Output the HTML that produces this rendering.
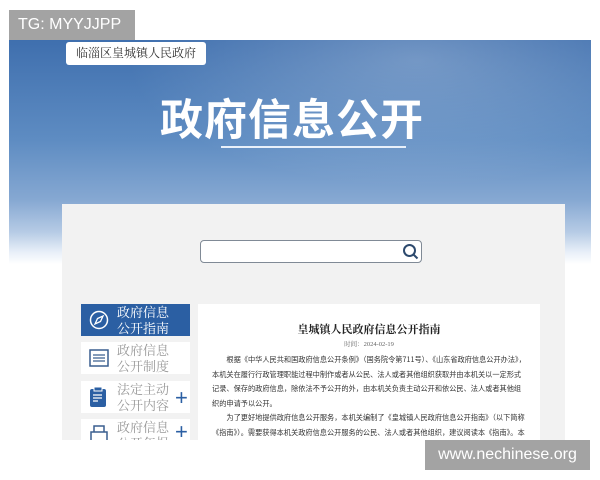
<!DOCTYPE html>
<html><head><meta charset="utf-8"><style>
body{margin:0;width:600px;height:480px;background:#fff;position:relative;overflow:hidden;font-family:"Liberation Serif","Noto Serif CJK SC",serif}
.abs{position:absolute}
.banner{left:9px;top:40px;width:582px;height:400px;background:linear-gradient(180deg,#3f6fae 0%,#5e8cc2 25%,#86a8d2 40%,#b6cbe5 48%,#e8eff8 53%,#fff 56%,#fff 100%)}
.glow{left:9px;top:40px;width:582px;height:200px;background:radial-gradient(ellipse at 70% 10%,rgba(255,255,255,.25),rgba(255,255,255,0) 50%)}
.panel{left:62px;top:204px;width:503px;height:236px;background:#f2f2f2}
.title{left:160px;width:300px;top:92px;font:bold 43px "Noto Sans CJK SC",sans-serif;color:#fff;letter-spacing:1px;line-height:50px}
.side{left:81px;width:109px;background:#fff;font-size:13px;color:#999;line-height:16px}
.side .t{position:absolute;left:36px;top:1px}
</style></head><body>
<div class="abs banner"></div><div class="abs glow"></div>
<div class="abs" style="left:9px;top:10px;width:126px;height:30px;background:#a3a3a3;color:#fff;font:16px 'Liberation Sans',sans-serif;line-height:30px;padding-left:9px;box-sizing:border-box">TG: MYYJJPP</div>
<div class="abs" style="left:66px;top:42px;width:140px;height:23px;background:#fff;border-radius:3px;font-size:12px;line-height:23px;text-align:center;color:#333">临淄区皇城镇人民政府</div>
<div class="abs title">政府信息公开</div>
<div class="abs" style="left:221px;top:146px;width:185px;height:2px;background:#e8f0fa"></div>
<div class="abs panel"></div>
<div class="abs" style="left:200px;top:240px;width:222px;height:23px;border:1px solid #808a96;border-radius:4px;background:#fff;box-sizing:border-box"></div>
<svg class="abs" style="left:402px;top:243px" width="18" height="18"><circle cx="7.5" cy="7.5" r="5.5" stroke="#2d4a6e" stroke-width="2" fill="none"/><line x1="11.5" y1="11.5" x2="15.5" y2="15.5" stroke="#2d4a6e" stroke-width="2"/></svg>
<div class="abs side" style="top:304px;height:32px;background:#2b5fa3;color:#fff"><svg class="abs" style="left:8px;top:6px" width="20" height="20"><circle cx="10" cy="10" r="8.5" stroke="#fff" stroke-width="1.5" fill="none"/><path d="M6 14 L8.5 8.5 L14 6 L11.5 11.5Z" stroke="#fff" stroke-width="1.3" fill="none"/></svg><div class="t">政府信息<br>公开指南</div></div>
<div class="abs side" style="top:342px;height:32px"><svg class="abs" style="left:8px;top:7px" width="20" height="18"><rect x="1" y="1" width="18" height="16" stroke="#3a5f8f" stroke-width="1.5" fill="none"/><path d="M4 6h12M4 9h12M4 12h12" stroke="#3a5f8f" stroke-width="1.2"/></svg><div class="t">政府信息<br>公开制度</div></div>
<div class="abs side" style="top:381px;height:32px"><svg class="abs" style="left:8px;top:5px" width="18" height="22"><rect x="1" y="3" width="16" height="18" rx="2" fill="#2b5fa3"/><rect x="5" y="1" width="8" height="4" fill="#2b5fa3" stroke="#fff"/><path d="M4 9h9M4 12h9M4 15h5" stroke="#fff" stroke-width="1.2"/></svg><div class="t">法定主动<br>公开内容</div><div class="abs" style="left:94px;top:4px;font:22px 'Liberation Sans';color:#2b5fa3">+</div></div>
<div class="abs side" style="top:419px;height:21px;overflow:hidden"><svg class="abs" style="left:8px;top:5px" width="20" height="20"><path d="M2 8h16v12H2z M5 8V2h10v6" stroke="#3a5f8f" stroke-width="1.5" fill="none"/></svg><div class="t">政府信息<br>公开年报</div><div class="abs" style="left:94px;top:0px;font:22px 'Liberation Sans';color:#2b5fa3">+</div></div>
<div class="abs" style="left:198px;top:304px;width:342px;height:136px;background:#fff;overflow:hidden;font-size:7.2px;color:#333;line-height:14.5px">
<div style="text-align:center;font:bold 11px 'Noto Serif CJK SC',serif;margin-top:18px;color:#222;line-height:14px">皇城镇人民政府信息公开指南</div>
<div style="text-align:center;font-size:6.5px;color:#666;margin-top:4px;line-height:10px">时间：2024-02-19</div>
<div style="padding:3px 14px 0 14px;font-family:'Noto Sans CJK SC',sans-serif">
<div style="text-indent:2em">根据《中华人民共和国政府信息公开条例》（国务院令第711号）、《山东省政府信息公开办法》，本机关在履行行政管理职能过程中制作或者从公民、法人或者其他组织获取并由本机关以一定形式记录、保存的政府信息，除依法不予公开的外，由本机关负责主动公开和依公民、法人或者其他组织的申请予以公开。</div>
<div style="text-indent:2em">为了更好地提供政府信息公开服务，本机关编制了《皇城镇人民政府信息公开指南》（以下简称《指南》）。需要获得本机关政府信息公开服务的公民、法人或者其他组织，建议阅读本《指南》。本《指南》根据工作情况变化适时进行更新。公民、法人或者其他组织可以在皇城镇人民政府网站查阅。</div>
</div></div>
<div class="abs" style="left:425px;top:440px;width:165px;height:30px;background:#a3a3a3;color:#fff;font:16px 'Liberation Sans',sans-serif;line-height:30px;text-align:center">www.nechinese.org</div>
</body></html>
